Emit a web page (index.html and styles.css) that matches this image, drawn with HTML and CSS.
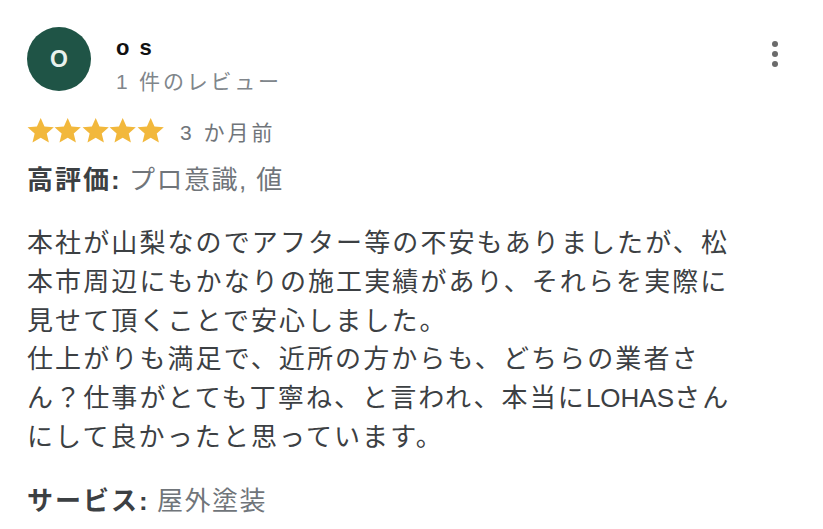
FILE: index.html
```html
<!DOCTYPE html>
<html lang="ja">
<head>
<meta charset="utf-8">
<link rel="stylesheet" href="styles.css">
</head>
<body>
<div class="review">
  <div class="header">
    <div class="avatar">O</div>
    <div class="who">
      <div class="name">o s</div>
      <div class="count">1 件のレビュー</div>
    </div>
    <div class="menu"><span></span><span></span><span></span></div>
  </div>
  <div class="rating">
    <div class="stars">
      <svg viewBox="0 0 24 24"><path d="M12 .8L15.3 8.3 23.5 9 17.3 14.4 19.2 22.4 12 18.2 4.8 22.4 6.7 14.4 .5 9 8.7 8.3z"/></svg>
      <svg viewBox="0 0 24 24"><path d="M12 .8L15.3 8.3 23.5 9 17.3 14.4 19.2 22.4 12 18.2 4.8 22.4 6.7 14.4 .5 9 8.7 8.3z"/></svg>
      <svg viewBox="0 0 24 24"><path d="M12 .8L15.3 8.3 23.5 9 17.3 14.4 19.2 22.4 12 18.2 4.8 22.4 6.7 14.4 .5 9 8.7 8.3z"/></svg>
      <svg viewBox="0 0 24 24"><path d="M12 .8L15.3 8.3 23.5 9 17.3 14.4 19.2 22.4 12 18.2 4.8 22.4 6.7 14.4 .5 9 8.7 8.3z"/></svg>
      <svg viewBox="0 0 24 24"><path d="M12 .8L15.3 8.3 23.5 9 17.3 14.4 19.2 22.4 12 18.2 4.8 22.4 6.7 14.4 .5 9 8.7 8.3z"/></svg>
    </div>
    <span class="date">3 か月前</span>
  </div>
  <div class="attr"><b>高評価:</b> <span>プロ意識, 値</span></div>
  <p class="body">本社が山梨なのでアフター等の不安もありましたが、松<br>本市周辺にもかなりの施工実績があり、それらを実際に<br>見せて頂くことで安心しました。<br>仕上がりも満足で、近所の方からも、どちらの業者さ<br>ん？仕事がとても丁寧ね、と言われ、本当に<span class="lat">LOHAS</span>さん<br>にして良かったと思っています。</p>
  <div class="attr service"><b>サービス:</b> <span>屋外塗装</span></div>
</div>
</body>
</html>
```
FILE: styles.css
```css
html, body {
  margin: 0;
  padding: 0;
  background: #ffffff;
}
body {
  font-family: "Liberation Sans", "Noto Sans CJK JP", sans-serif;
  color: #3c4043;
}
.review {
  padding: 27px 0 0 27px;
  width: 780px;
}
.header {
  display: flex;
  align-items: flex-start;
  height: 64px;
}
.avatar {
  width: 64px;
  height: 64px;
  border-radius: 50%;
  background: #1f5446;
  color: #e9f1ed;
  font-size: 23px;
  font-weight: bold;
  display: flex;
  align-items: center;
  justify-content: center;
  flex: none;
}
.who {
  margin-left: 25px;
  flex: 1;
}
.name {
  font-weight: bold;
  font-size: 22px;
  color: #111;
  letter-spacing: 2px;
  margin-top: 8px;
  line-height: 26px;
}
.count {
  font-size: 21px;
  color: #80868b;
  letter-spacing: 2.8px;
  margin-top: 8px;
  line-height: 26px;
}
.menu {
  display: flex;
  flex-direction: column;
  gap: 4px;
  margin-top: 14px;
  margin-right: 29px;
}
.menu span {
  width: 6px;
  height: 6px;
  border-radius: 50%;
  background: #6b6b6b;
}
.rating {
  display: flex;
  align-items: center;
  margin-top: 25px;
  height: 30px;
}
.stars {
  display: flex;
}
.stars svg {
  width: 27.4px;
  height: 27.4px;
  fill: #f2b83c;
}
.date {
  margin-left: 16px;
  font-size: 21px;
  color: #70757a;
  letter-spacing: 3px;
}
.attr {
  font-size: 26px;
  margin-top: 16px;
  line-height: 36px;
}
.attr b {
  color: #3c4043;
  font-weight: bold;
  letter-spacing: 2px;
}
.attr span {
  color: #70757a;
  letter-spacing: 1.5px;
}
.body {
  margin: 26px 0 0 0;
  font-size: 26px;
  line-height: 38.8px;
  letter-spacing: 2.1px;
  color: #3c4043;
}
.lat {
  letter-spacing: 0;
}
.service {
  margin-top: 26px;
}
```
